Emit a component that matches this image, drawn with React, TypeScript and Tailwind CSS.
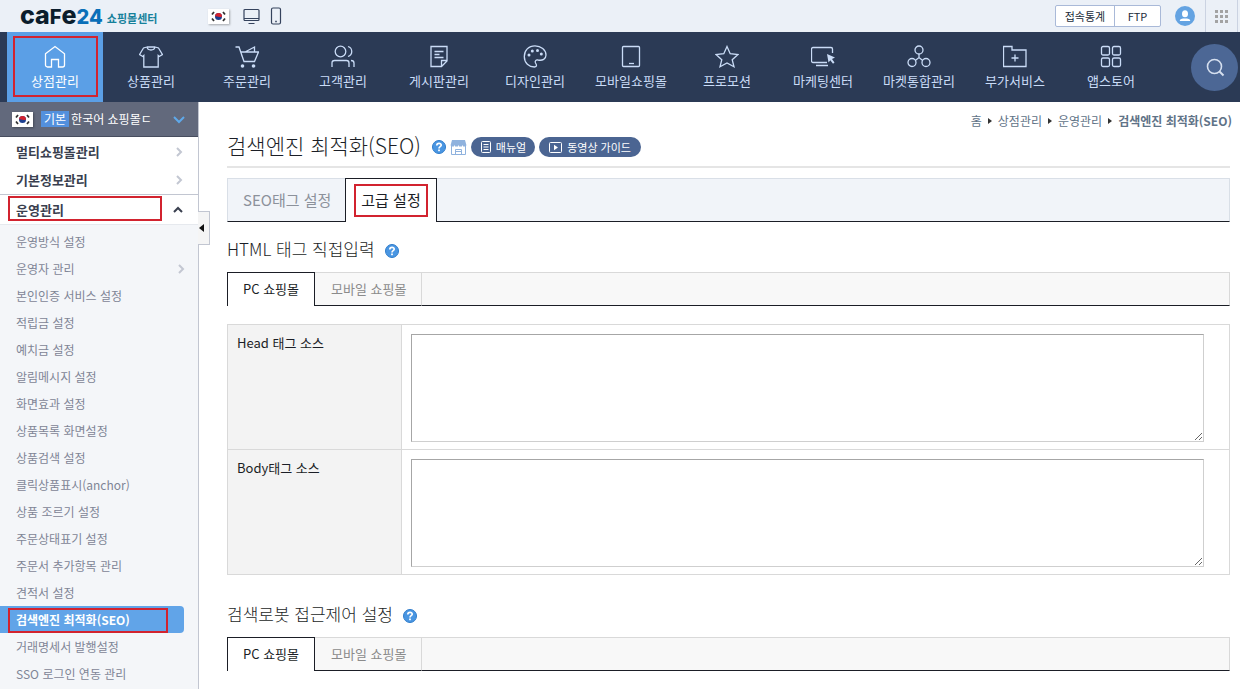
import React, { useState } from 'react';

interface NavItem {
  label: string;
  icon: React.ReactNode;
}

interface SubItem {
  label: string;
  hasChildren?: boolean;
}

const NAV_ITEMS: NavItem[] = [
  {
    label: '상점관리',
    icon: <path d="M2.5 8.7 12 1.500l9.500 7.200V20a2 2 0 0 1-2 2H15.500v-7.500h-7V22H4.500a2 2 0 0 1-2-2Z" />,
  },
  {
    label: '상품관리',
    icon: <path d="M8 2 4.500 3 .6 9.500l3.200 2 1-1V22h14.400V10.500l1 1 3.200-2L19.500 3 16 2c-.6 4-7.400 4-8 0Zm0 0h8" />,
  },
  {
    label: '주문관리',
    icon: (
      <>
        <path d="M.5 2H4l5 14.500h10.500L23.500 7H6M10 7l9.500-5V7M6.500 9.500l2.500 7" />
        <circle cx="7.500" cy="21" r="1.800" fill="currentColor" stroke="none" />
        <circle cx="18.500" cy="21" r="1.800" fill="currentColor" stroke="none" />
      </>
    ),
  },
  {
    label: '고객관리',
    icon: (
      <>
        <circle cx="9.500" cy="6.500" r="5.300" />
        <path d="M1 22v-4a2.500 2.500 0 0 1 2.500-2.500h12A2.500 2.500 0 0 1 18 18v4M17 1.500c5 1.500 5 8.500 0 10M20 15.500c2 0 3 1 3 2.500v4" />
      </>
    ),
  },
  {
    label: '게시판관리',
    icon: <path d="M4 1.500h16V16l-5.500 5.500H4ZM20 15.500h-5.500v6M7.500 6.500h9M7.500 9.500h5M7.500 12.500h9" />,
  },
  {
    label: '디자인관리',
    icon: (
      <>
        <path d="M12 .8C5.500.8 1.300 5.500 1.300 11.500 1.300 18 6 22 11.500 22c3 0 2-2.500 1-4-1-2 .5-3.500 2.500-3 4.500 1 8-1 8-5C23 5 18 .8 12 .8Z" />
        <g fill="currentColor" stroke="none">
          <circle cx="6" cy="10" r="1.500" />
          <circle cx="9.300" cy="6" r="1.500" />
          <circle cx="14.500" cy="5.500" r="1.500" />
          <circle cx="18.300" cy="9" r="1.500" />
        </g>
      </>
    ),
  },
  {
    label: '모바일쇼핑몰',
    icon: (
      <>
        <rect x="3.500" y="1.500" width="17" height="20" rx="1" />
        <path d="M10 18.500h5" />
      </>
    ),
  },
  {
    label: '프로모션',
    icon: <path d="m12 1.500 3.200 7.200 7.800.8-5.800 5.200 1.800 7.100-7-3.800-7 3.800 1.800-7.100L1 9.500l7.800-.8Z" />,
  },
  {
    label: '마케팅센터',
    icon: (
      <>
        <path d="M16 17.500H2a1.500 1.500 0 0 1-1.500-1.500V4A1.500 1.500 0 0 1 2 2.500h18A1.500 1.500 0 0 1 21.500 4v4M5 20.500h12" />
        <path d="m16 9 8 3.500-3 1.500 2.500 3.500-1.500 1.200-2.700-3.400-1.800 2.200Z" fill="currentColor" stroke="none" />
      </>
    ),
  },
  {
    label: '마켓통합관리',
    icon: (
      <>
        <circle cx="12" cy="5" r="4" />
        <circle cx="5" cy="17.500" r="4" />
        <circle cx="19" cy="17.500" r="4" />
        <path d="M12 9v3.500M8.300 15.500 12 12.500l3.700 3" />
      </>
    ),
  },
  {
    label: '부가서비스',
    icon: <path d="M.5 21.500v-20h8.500v3.500h14v16.500ZM12 9.500v7M8.500 13h7" />,
  },
  {
    label: '앱스토어',
    icon: (
      <>
        <rect x="2.500" y="1.500" width="8" height="8.500" rx="1.500" />
        <rect x="13.500" y="1.500" width="8" height="8.500" rx="1.500" />
        <rect x="2.500" y="13" width="8" height="8.500" rx="1.500" />
        <rect x="13.500" y="13" width="8" height="8.500" rx="1.500" />
      </>
    ),
  },
];

const SUB_ITEMS: SubItem[] = [
  { label: '운영방식 설정' },
  { label: '운영자 관리', hasChildren: true },
  { label: '본인인증 서비스 설정' },
  { label: '적립금 설정' },
  { label: '예치금 설정' },
  { label: '알림메시지 설정' },
  { label: '화면효과 설정' },
  { label: '상품목록 화면설정' },
  { label: '상품검색 설정' },
  { label: '클릭상품표시(anchor)' },
  { label: '상품 조르기 설정' },
  { label: '주문상태표기 설정' },
  { label: '주문서 추가항목 관리' },
  { label: '견적서 설정' },
  { label: '검색엔진 최적화(SEO)' },
  { label: '거래명세서 발행설정' },
  { label: 'SSO 로그인 연동 관리' },
];

const ACTIVE_SUB = '검색엔진 최적화(SEO)';

const KoreanFlag = () => (
  <span className="flex h-[15px] w-[21px] shrink-0 items-center justify-center bg-white shadow-[1px_1px_2px_rgba(0,0,0,0.3)]">
    <svg width="15" height="11" viewBox="0 0 15 11" aria-hidden="true">
      <circle cx="7.500" cy="5.500" r="3.500" fill="#1c3f8f" />
      <path d="M4 5.500a3.500 3.500 0 0 1 7 0c-1.800 1.600-5.200-1.200-7 0Z" fill="#d3222f" />
      <path d="M1 3.500 3 1M12 1l2 2.500M1 7.500 3 10M12 10l2-2.500" stroke="#333" strokeWidth="1.800" />
    </svg>
  </span>
);

const Chevron = ({ className, d }: { className: string; d: string }) => (
  <svg className={className} width="12" height="12" viewBox="0 0 12 12" fill="none" stroke="currentColor" strokeWidth="2" aria-hidden="true">
    <path d={d} />
  </svg>
);

const RIGHT = 'm4 2 4 4-4 4';

// Red frame that calls out the menu path
const Mark = ({ className }: { className: string }) => (
  <span className={`pointer-events-none absolute border-2 border-[#d2232f] ${className}`} />
);

const HelpButton = () => (
  <button type="button" aria-label="도움말" className="shrink-0">
    <svg width="14" height="14" viewBox="0 0 14 14" aria-hidden="true">
      <circle cx="7" cy="7" r="6.500" fill="#4a96e2" stroke="#2f7ccb" />
      <path d="M4.800 5.500c0-3 4.600-2.800 4.400-.2C9.100 6.700 7 6.700 7 8.400" fill="none" stroke="#fff" strokeWidth="1.700" />
      <rect x="6.100" y="9.500" width="1.800" height="1.700" fill="#fff" />
    </svg>
  </button>
);

const TopBar = () => (
  <header className="flex h-8 items-center bg-[#ebf0f7] pl-5">
    <a href="#" className="flex items-center">
      <span className="flex items-baseline font-['Inter',sans-serif] text-[25px] leading-8 font-extrabold text-[#0b1d2c]">
        ca<span className="text-xl leading-8">F</span>e
        <span className="text-xl leading-8 text-[#0a6fb8]">24</span>
      </span>
      <span className="ml-1 pt-1 text-[11px] font-bold text-[#16819b]">쇼핑몰센터</span>
    </a>
    <div className="ml-[51px] flex items-center text-[#35435d]">
      <KoreanFlag />
      <svg className="ml-3.5" width="17" height="17" viewBox="0 0 17 17" fill="none" stroke="currentColor" strokeWidth="1.200" aria-hidden="true">
        <rect x="1" y="1.500" width="15" height="11" rx="1" />
        <path d="M1 10.500h15M5.500 15.500h6" />
      </svg>
      <svg className="ml-2.5" width="12" height="18" viewBox="0 0 12 18" fill="none" stroke="currentColor" strokeWidth="1.200" aria-hidden="true">
        <rect x="1.500" y="1" width="9" height="16" rx="1.500" />
        <path d="M5.200 14.500h1.600" strokeWidth="1.500" />
      </svg>
    </div>
    <div className="ml-auto flex h-full items-center">
      <div className="flex h-[22px] rounded-xs border border-[#a9b9d8] bg-white text-[11px] text-[#222b3a]">
        <button type="button" className="w-[59px] border-r border-[#a9b9d8]">접속통계</button>
        <button type="button" className="w-[45px]">FTP</button>
      </div>
      <button type="button" aria-label="내 정보" className="ml-3.5">
        <svg width="20" height="20" viewBox="0 0 20 20" aria-hidden="true">
          <circle cx="10" cy="10" r="10" fill="#64a3e2" />
          <ellipse cx="10" cy="7.800" rx="3" ry="3.500" fill="#fff" />
          <path d="M4.800 15c0-2.300 2.200-2.500 5.200-2.500s5.200.2 5.200 2.500Z" fill="#fff" />
        </svg>
      </button>
      <button type="button" aria-label="전체 서비스" className="mr-0.5 ml-2.5 flex h-full w-[33px] items-center justify-center border-x border-[#cbd3e2] text-[#a3a3a3]">
        <svg width="13" height="13" viewBox="0 0 13 13" fill="currentColor" aria-hidden="true">
          {[0, 5, 10].map(y => [0, 5, 10].map(x => <rect key={`${x}-${y}`} x={x} y={y} width="3" height="3" />))}
        </svg>
      </button>
    </div>
  </header>
);

const MainNav = () => (
  <nav className="flex h-[70px] bg-[#2b3a55] pr-0.5 pl-[7px]">
    {NAV_ITEMS.map((item, i) => (
      <a
        key={item.label}
        href="#"
        className={`relative flex w-24 flex-col items-center pt-[13px] text-[13px] leading-6 whitespace-nowrap ${
          i === 0 ? 'bg-[#5b9fe6] text-white' : 'text-[#cadcf7]'
        }`}
      >
        <svg width="24" height="24" viewBox="0 0 24 24" fill="none" stroke="currentColor" strokeWidth="1.300" aria-hidden="true">
          {item.icon}
        </svg>
        {item.label}
        {i === 0 && <Mark className="top-1 right-[5px] bottom-[5px] left-1.5" />}
      </a>
    ))}
    <button type="button" aria-label="검색" className="my-auto ml-auto flex h-[47px] w-[47px] shrink-0 items-center justify-center rounded-full bg-[#4c6795] text-[#d5dfef]">
      <svg width="20" height="20" viewBox="0 0 20 20" fill="none" stroke="currentColor" strokeWidth="1.600" aria-hidden="true">
        <circle cx="9.500" cy="9.500" r="7" />
        <path d="m14.500 14.500 4 4" strokeWidth="2" />
      </svg>
    </button>
  </nav>
);

const Sidebar = () => (
  <aside className="relative w-[199px] shrink-0 border-r border-[#c2c6d1] bg-[#f4f6f9] pb-0.5">
    <button type="button" className="flex h-[35px] w-full items-center border-b border-[#474d5e] bg-[#62697c] pr-[13px] pl-3 text-xs text-white">
      <KoreanFlag />
      <span className="ml-2 bg-[#5390dd] px-[3px] leading-4">기본</span>
      <span className="ml-0.5 w-20 overflow-hidden text-left whitespace-nowrap">한국어 쇼핑몰ㄷ</span>
      <Chevron className="ml-auto shrink-0 text-[#5fa9ea]" d="m1 4 5 5 5-5" />
    </button>
    <div className="bg-white text-[13px] font-bold text-[#3a3f4f]">
      <a href="#" className="flex h-[29px] items-center justify-between pr-[13px] pl-4">
        멀티쇼핑몰관리
        <Chevron className="text-[#c3c7d2]" d={RIGHT} />
      </a>
      <a href="#" className="flex h-[29px] items-center justify-between border-b border-[#c2c6d1] pr-[13px] pl-4">
        기본정보관리
        <Chevron className="text-[#c3c7d2]" d={RIGHT} />
      </a>
      <a href="#" className="relative flex h-[30px] items-center justify-between border-b border-[#e6e9ee] pr-3.5 pl-4">
        운영관리
        <Chevron className="text-[#3a3f4f]" d="m2 8 4-4 4 4" />
        <Mark className="top-px right-9 bottom-[3px] left-2" />
      </a>
    </div>
    <ul className="pt-[3px] text-xs leading-[27px] text-[#7f8596]">
      {SUB_ITEMS.map(item =>
        item.label === ACTIVE_SUB ? (
          <li key={item.label} className="relative mr-3.5 rounded-r bg-[#61a4e8] pl-4 font-bold text-white">
            <a href="#">{item.label}</a>
            <Mark className="top-0.5 right-4 bottom-0 left-2" />
          </li>
        ) : (
          <li key={item.label} className="pr-[11px] pl-4">
            <a href="#" className="flex items-center justify-between">
              {item.label}
              {item.hasChildren && <Chevron className="text-[#c3c7d2]" d={RIGHT} />}
            </a>
          </li>
        )
      )}
    </ul>
    <button type="button" aria-label="메뉴 접기" className="absolute top-[109px] -right-3 flex h-[34px] w-3 items-center justify-center border border-l-0 border-[#c2c6d1] bg-[#f5f5f5] pr-1">
      <svg width="5" height="8" viewBox="0 0 5 8" aria-hidden="true">
        <path d="M5 0v8L0 4Z" fill="#111" />
      </svg>
    </button>
  </aside>
);

const Breadcrumb = () => {
  const trail = ['홈', '상점관리', '운영관리'];
  return (
    <nav className="flex h-[18px] items-center justify-end pr-2 text-xs text-[#5f7387]">
      {trail.map(label => (
        <React.Fragment key={label}>
          <a href="#">{label}</a>
          <svg className="mx-1.5" width="4" height="6" viewBox="0 0 4 6" aria-hidden="true">
            <path d="M0 0v6l4-3Z" fill="#333" />
          </svg>
        </React.Fragment>
      ))}
      <strong>검색엔진 최적화(SEO)</strong>
    </nav>
  );
};

const PageTitle = () => (
  <div className="flex h-[38px] items-center border-b-2 border-[#e5e5e5] pb-1.5">
    <h1 className="text-[21px] leading-8 font-light text-[#1b1e26]">검색엔진 최적화(SEO)</h1>
    <div className="ml-[11px] flex items-center gap-1 pt-1">
      <HelpButton />
      <svg width="17" height="15" viewBox="0 0 17 15" fill="none" stroke="#8fb2de" aria-hidden="true">
        <path d="M2 0h13l1.500 5.500H.5Z" fill="#8fb2de" stroke="none" />
        <path d="M1.500 5v9.500h14V5M5.500 14V9.500h6V14M5.500 11.500h6" />
        <path d="M1 5.500h15" strokeDasharray="3 1" strokeWidth="2" />
      </svg>
      <a href="#" className="flex h-5 items-center gap-[5px] rounded-full bg-[#4b6592] pr-[9px] pl-2.5 text-[11px] text-white">
        <svg width="10" height="12" viewBox="0 0 10 12" fill="none" stroke="currentColor" aria-hidden="true">
          <rect x=".5" y=".5" width="9" height="11" rx="1" />
          <path d="M2.500 3.500h5M2.500 6h5M2.500 8.500h5" />
        </svg>
        매뉴얼
      </a>
      <a href="#" className="flex h-5 items-center gap-[5px] rounded-full bg-[#4b6592] px-2.5 text-[11px] text-white">
        <svg width="13" height="11" viewBox="0 0 13 11" fill="none" stroke="currentColor" aria-hidden="true">
          <rect x=".5" y=".5" width="12" height="10" rx="1" />
          <path d="M5 2.750v5.500l4-2.750Z" fill="currentColor" stroke="none" />
        </svg>
        동영상 가이드
      </a>
    </div>
  </div>
);

const SectionTitle = ({ children }: { children: React.ReactNode }) => (
  <div className="flex h-[50px] items-center gap-2.5 pt-1">
    <h2 className="text-[17px] leading-6 font-light text-[#1b1e26]">{children}</h2>
    <span className="flex pt-1">
      <HelpButton />
    </span>
  </div>
);

const DeviceTabs = () => {
  const [device, setDevice] = useState('PC 쇼핑몰');
  return (
    <div className="flex h-[34px] text-[13px]">
      {['PC 쇼핑몰', '모바일 쇼핑몰'].map(label => (
        <button
          key={label}
          type="button"
          onClick={() => setDevice(label)}
          className={
            label === device
              ? 'border border-b-0 border-[#1b1e26] bg-white px-[15px] pb-0.5 text-[#1b1e26]'
              : 'border-t border-r border-b border-t-[#d9d9d9] border-r-[#d9d9d9] border-b-[#1b1e26] bg-[#f8f8f8] pr-[15px] pb-px pl-4 text-[#8b8b8b]'
          }
        >
          {label}
        </button>
      ))}
      <div className="flex-1 border-t border-r border-b border-t-[#d9d9d9] border-r-[#d9d9d9] border-b-[#1b1e26] bg-[#f8f8f8]" />
    </div>
  );
};

const SourceRow = ({ id, label }: { id: string; label: string }) => {
  const [value, setValue] = useState('');
  return (
    <tr>
      <th scope="row" className="w-[174px] border border-[#d9d9d9] bg-[#f3f3f3] px-[9px] py-2 text-left align-top text-[13px] leading-5 font-normal text-[#1b1e26]">
        <label htmlFor={id}>{label}</label>
      </th>
      <td className="border border-[#d9d9d9] pt-[9px] pr-[25px] pb-[7px] pl-[9px] align-top">
        <textarea
          id={id}
          value={value}
          onChange={e => setValue(e.target.value)}
          className="block h-[108px] w-full border border-t-[#a6a6a6] border-r-[#cfcfcf] border-b-[#cfcfcf] border-l-[#a6a6a6] p-1 text-xs"
        />
      </td>
    </tr>
  );
};

const App: React.FC = () => (
  <div lang="ko" className="flex min-h-screen flex-col bg-white font-['Noto_Sans_CJK_KR',sans-serif]">
    <TopBar />
    <MainNav />
    <div className="flex flex-1">
      <Sidebar />
      <main className="min-w-0 flex-1 pt-2.5 pl-7">
        <Breadcrumb />
        <div className="pr-2.5">
          <PageTitle />
          <div className="mt-2.5 flex h-11 text-[15px]">
            <button type="button" className="border-t border-b border-l border-t-[#d9dfe7] border-b-[#1b1e26] border-l-[#d9dfe7] bg-[#f1f4f9] pr-3.5 pl-[15px] text-[#8c919b]">
              SEO태그 설정
            </button>
            <button type="button" className="relative border border-b-0 border-[#1b1e26] bg-white px-[15px] text-[#1b1e26]">
              고급 설정
              <Mark className="top-[5px] right-2 bottom-[5px] left-2" />
            </button>
            <div className="flex-1 border-t border-r border-b border-t-[#d9dfe7] border-r-[#d9dfe7] border-b-[#1b1e26] bg-[#f1f4f9]" />
          </div>

          <SectionTitle>HTML 태그 직접입력</SectionTitle>
          <DeviceTabs />
          <table className="mt-[18px] w-full border-collapse">
            <tbody>
              <SourceRow id="head-source" label="Head 태그 소스" />
              <SourceRow id="body-source" label="Body태그 소스" />
            </tbody>
          </table>

          <div className="mt-3">
            <SectionTitle>검색로봇 접근제어 설정</SectionTitle>
            <DeviceTabs />
          </div>
        </div>
      </main>
    </div>
  </div>
);

export default App;
